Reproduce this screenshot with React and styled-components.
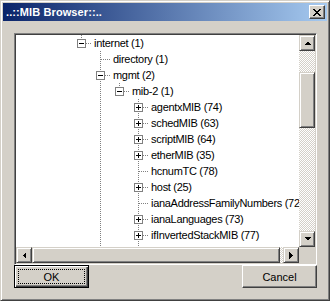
import React from "react";
import styled, { createGlobalStyle } from "styled-components";

const GlobalStyle = createGlobalStyle`
  html, body {
    margin: 0;
    padding: 0;
    background: #d4d0c8;
  }
  body {
    font-family: "Liberation Sans", Arial, sans-serif;
    font-size: 11px;
  }
`;

const raised = `
  border: 1px solid;
  border-color: #d4d0c8 #404040 #404040 #d4d0c8;
  box-shadow: inset 1px 1px #fff, inset -1px -1px #808080;
`;

const Window = styled.div`
  width: 330px;
  height: 301px;
  box-sizing: border-box;
  ${raised}
  padding: 2px;
  background: #d4d0c8;
  display: flex;
  flex-direction: column;
`;

const TitleBar = styled.div`
  height: 18px;
  flex: none;
  display: flex;
  align-items: center;
  justify-content: space-between;
  padding: 0 2px 0 3px;
  background: linear-gradient(to right, #0a246a, #a6caf0);
  color: #fff;
  font-weight: bold;
  font-size: 11px;
  letter-spacing: 0.1px;
`;

const CloseButton = styled.div`
  width: 16px;
  height: 14px;
  box-sizing: border-box;
  ${raised}
  border-color: #fff #404040 #404040 #fff;
  box-shadow: inset -1px -1px #808080;
  background: #d4d0c8;
  display: flex;
  align-items: center;
  justify-content: center;
`;

const Body = styled.div`
  flex: 1;
  display: flex;
  flex-direction: column;
  padding: 12px 10px 0 11px;
`;

const TreeBox = styled.div`
  height: 232px;
  box-sizing: border-box;
  border: 1px solid;
  border-color: #808080 #fff #fff #808080;
  box-shadow: inset 1px 1px #404040, inset -1px -1px #d4d0c8;
  padding: 1px;
  display: grid;
  grid-template-columns: 1fr 16px;
  grid-template-rows: 1fr 16px;
`;

const Tree = styled.div`
  background: #fff;
  overflow: hidden;
  padding-left: 56px;
`;

const Row = styled.div`
  height: 16px;
  display: flex;
  align-items: center;
  white-space: nowrap;
`;

const Label = styled.span`
  padding-left: 3px;
  color: #000;
  font-size: 11px;
  letter-spacing: -0.3px;
`;

const VScroll = styled.div`
  display: flex;
  flex-direction: column;
`;

const HScroll = styled.div`
  display: flex;
`;

const Corner = styled.div`
  background: #d4d0c8;
`;

const ArrowButton = styled.div`
  width: 16px;
  height: 16px;
  flex: none;
  box-sizing: border-box;
  ${raised}
  background: #d4d0c8;
  display: flex;
  align-items: center;
  justify-content: center;
`;

const Track = styled.div`
  flex: 1;
  display: flex;
  flex-direction: ${(p) => (p.$vertical ? "column" : "row")};
  background: repeating-conic-gradient(#d4d0c8 0 25%, #fff 0 50%) 0 0 / 2px 2px;
`;

const Thumb = styled.div`
  flex: none;
  box-sizing: border-box;
  ${raised}
  background: #d4d0c8;
`;

const ButtonRow = styled.div`
  display: flex;
  justify-content: space-between;
  margin-top: 0;
`;

const Button = styled.div`
  width: 75px;
  height: 23px;
  box-sizing: border-box;
  display: flex;
  align-items: center;
  justify-content: center;
  background: #d4d0c8;
  color: #000;
  font-size: 11px;
  border: 1px solid;
  border-color: ${(p) => (p.$default ? "#000" : "#fff #404040 #404040 #fff")};
  box-shadow: ${(p) =>
    p.$default
      ? "inset 1px 1px #fff, inset -1px -1px #404040, inset -2px -2px #808080"
      : "inset -1px -1px #808080"};
  padding: 3px;
`;

const FocusRing = styled.div`
  flex: 1;
  align-self: stretch;
  display: flex;
  align-items: center;
  justify-content: center;
  border: 1px dotted #000;
`;

const Arrow = ({ dir }) => {
  const shapes = {
    up: "M0 4h7L3.5 0.5z",
    down: "M0 0h7L3.5 3.5z",
    left: "M4 0v7L0.5 3.5z",
    right: "M0 0v7L3.5 3.5z",
  };
  const vertical = dir === "up" || dir === "down";
  return (
    <svg width={vertical ? 7 : 4} height={vertical ? 4 : 7} style={{ display: "block" }}>
      <path d={shapes[dir]} fill="#000" shapeRendering="crispEdges" />
    </svg>
  );
};

const CloseGlyph = () => (
  <svg width="8" height="7" style={{ display: "block" }}>
    <path
      fill="#000"
      shapeRendering="crispEdges"
      d="M0 0h2v1H0zM6 0h2v1H6zM1 1h2v1H1zM5 1h2v1H5zM2 2h4v1H2zM3 3h2v1H3zM2 4h4v1H2zM1 5h2v1H1zM5 5h2v1H5zM0 6h2v1H0zM6 6h2v1H6z"
    />
  </svg>
);

const DOT = "1 1";

const Pipe = () => (
  <svg width="19" height="16" style={{ display: "block", flex: "none" }}>
    <line x1="9.5" y1="0" x2="9.5" y2="16" stroke="#808080" strokeDasharray={DOT} />
  </svg>
);

const Blank = () => <div style={{ width: 19, flex: "none" }} />;

const Connector = ({ kind, last }) => (
  <svg width="19" height="16" style={{ display: "block", flex: "none" }}>
    <line x1="9.5" y1="0" x2="9.5" y2={last ? 8 : 16} stroke="#808080" strokeDasharray={DOT} />
    <line x1="10" y1="8.5" x2="19" y2="8.5" stroke="#808080" strokeDasharray={DOT} />
    {kind !== "leaf" && (
      <g shapeRendering="crispEdges">
        <rect x="5.5" y="4.5" width="8" height="8" fill="#fff" stroke="#808080" />
        <line x1="7" y1="8.5" x2="12" y2="8.5" stroke="#000" />
        {kind === "plus" && <line x1="9.5" y1="6" x2="9.5" y2="11" stroke="#000" />}
      </g>
    )}
  </svg>
);

const L3 = [false, true, false];

const nodes = [
  { text: "internet (1)", kind: "minus", last: true, guides: [] },
  { text: "directory (1)", kind: "leaf", last: false, guides: [false] },
  { text: "mgmt (2)", kind: "minus", last: false, guides: [false] },
  { text: "mib-2 (1)", kind: "minus", last: true, guides: [false, true] },
  { text: "agentxMIB (74)", kind: "plus", last: false, guides: L3 },
  { text: "schedMIB (63)", kind: "plus", last: false, guides: L3 },
  { text: "scriptMIB (64)", kind: "plus", last: false, guides: L3 },
  { text: "etherMIB (35)", kind: "plus", last: false, guides: L3 },
  { text: "hcnumTC (78)", kind: "leaf", last: false, guides: L3 },
  { text: "host (25)", kind: "plus", last: false, guides: L3 },
  { text: "ianaAddressFamilyNumbers (72)", kind: "leaf", last: false, guides: L3 },
  { text: "ianaLanguages (73)", kind: "plus", last: false, guides: L3 },
  { text: "ifInvertedStackMIB (77)", kind: "plus", last: false, guides: L3 },
  { text: "ipAddressMIB (79)", kind: "plus", last: false, guides: L3 },
];

export default function App() {
  return (
    <>
      <GlobalStyle />
      <Window>
        <TitleBar>
          <span>..::MIB Browser::..</span>
          <CloseButton>
            <CloseGlyph />
          </CloseButton>
        </TitleBar>
        <Body>
          <TreeBox>
            <Tree>
              {nodes.map((n, i) => (
                <Row key={i}>
                  {n.guides.map((g, j) => (g ? <Pipe key={j} /> : <Blank key={j} />))}
                  <Connector kind={n.kind} last={n.last} />
                  <Label>{n.text}</Label>
                </Row>
              ))}
            </Tree>
            <VScroll>
              <ArrowButton>
                <Arrow dir="up" />
              </ArrowButton>
              <Track $vertical>
                <Thumb style={{ marginTop: 21, height: 56 }} />
              </Track>
              <ArrowButton>
                <Arrow dir="down" />
              </ArrowButton>
            </VScroll>
            <HScroll>
              <ArrowButton>
                <Arrow dir="left" />
              </ArrowButton>
              <Track>
                <Thumb style={{ width: 248 }} />
              </Track>
              <ArrowButton>
                <Arrow dir="right" />
              </ArrowButton>
            </HScroll>
            <Corner />
          </TreeBox>
          <ButtonRow>
            <Button $default>
              <FocusRing>OK</FocusRing>
            </Button>
            <Button>Cancel</Button>
          </ButtonRow>
        </Body>
      </Window>
    </>
  );
}
